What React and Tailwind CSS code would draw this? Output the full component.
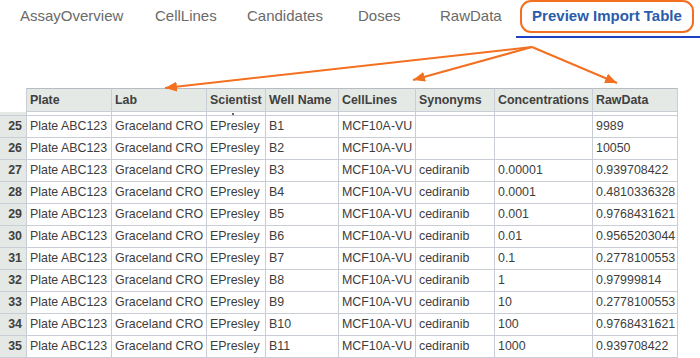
import React from "react";

const rows = [
  [25, "B1", "", "", "9989"],
  [26, "B2", "", "", "10050"],
  [27, "B3", "cediranib", "0.00001", "0.939708422"],
  [28, "B4", "cediranib", "0.0001", "0.4810336328"],
  [29, "B5", "cediranib", "0.001", "0.9768431621"],
  [30, "B6", "cediranib", "0.01", "0.9565203044"],
  [31, "B7", "cediranib", "0.1", "0.2778100553"],
  [32, "B8", "cediranib", "1", "0.97999814"],
  [33, "B9", "cediranib", "10", "0.2778100553"],
  [34, "B10", "cediranib", "100", "0.9768431621"],
  [35, "B11", "cediranib", "1000", "0.939708422"],
];

const headers = ["Plate", "Lab", "Scientist", "Well Name", "CellLines", "Synonyms", "Concentrations", "RawData"];

const gridCols = "grid grid-cols-[27px_85px_95px_59px_73px_77px_79px_98px_85px]";

function Cell({ children }) {
  return (
    <div className="h-[22px] border-r border-b border-[#c9ced6] pl-[3px] flex items-center whitespace-nowrap overflow-hidden">
      {children}
    </div>
  );
}

export default function App() {
  return (
    <div
      className="relative w-[700px] h-[358px] overflow-hidden bg-white text-[#3d3d3d]"
      style={{ fontFamily: '"Liberation Sans", Arial, sans-serif' }}
    >
      {/* Tabs */}
      <div className="flex h-[38px] text-[15px] text-[#6a6a6a]">
        <div className="ml-[20px] w-[135px] h-[33px] flex items-center">AssayOverview</div>
        <div className="w-[92px] h-[33px] flex items-center">CellLines</div>
        <div className="w-[111px] h-[33px] flex items-center">Candidates</div>
        <div className="w-[82px] h-[33px] flex items-center">Doses</div>
        <div className="w-[76px] h-[33px] flex items-center">RawData</div>
        <div className="w-[184px] h-[38px] border-b-2 border-[#1f3fc4]">
          <div className="ml-[4px] w-[174px] h-[33px] border-2 border-[#f37021] rounded-[11px] flex items-center justify-center font-bold text-[#2a5caa]">
            Preview Import Table
          </div>
        </div>
      </div>

      {/* Table */}
      <div className="mt-[50px] w-[678px] text-[12.4px]">
        <div className={gridCols}>
          <div className="h-[24px] border-r border-[#c9ced6]" />
          {headers.map((h) => (
            <div
              key={h}
              className="h-[24px] border-t border-r border-b border-t-[#b7bcc2] border-[#c9ced6] bg-[#e5e9e5] pl-[3px] flex items-center font-bold text-[#404040] whitespace-nowrap"
            >
              {h}
            </div>
          ))}
        </div>
        <div className={gridCols}>
          <div className="h-[4px] bg-[#e5e9e5] border-r border-b border-[#c9ced6]" />
          {headers.map((h, i) => (
            <div key={h} className="relative h-[4px] border-r border-b border-[#c9ced6]">
              {i === 2 && <div className="absolute left-[25px] top-[1px] w-[2px] h-[2px] bg-[#666]" />}
            </div>
          ))}
        </div>
        {rows.map(([n, well, syn, conc, raw]) => (
          <div key={n} className={gridCols}>
            <div className="h-[22px] bg-[#e5e9e5] border-r border-b border-[#c9ced6] pr-[4px] flex items-center justify-end font-bold text-[#404040]">
              {n}
            </div>
            <Cell>Plate ABC123</Cell>
            <Cell>Graceland CRO</Cell>
            <Cell>EPresley</Cell>
            <Cell>{well}</Cell>
            <Cell>MCF10A-VU</Cell>
            <Cell>{syn}</Cell>
            <Cell>{conc}</Cell>
            <Cell>{raw}</Cell>
          </div>
        ))}
      </div>

      {/* Annotation arrows */}
      <svg className="absolute left-0 top-0 pointer-events-none" width="700" height="358">
        <defs>
          <marker id="ah" viewBox="0 0 12 10" refX="12" refY="5" markerWidth="12" markerHeight="10" markerUnits="userSpaceOnUse" orient="auto">
            <path d="M0,0 L12,5 L0,10 z" fill="#f37021" />
          </marker>
        </defs>
        <g stroke="#f37021" strokeWidth="2" fill="none">
          <line x1="532" y1="47" x2="165" y2="88" markerEnd="url(#ah)" />
          <line x1="532" y1="47" x2="413" y2="80" markerEnd="url(#ah)" />
          <line x1="532" y1="47" x2="617" y2="83" markerEnd="url(#ah)" />
        </g>
      </svg>
    </div>
  );
}
